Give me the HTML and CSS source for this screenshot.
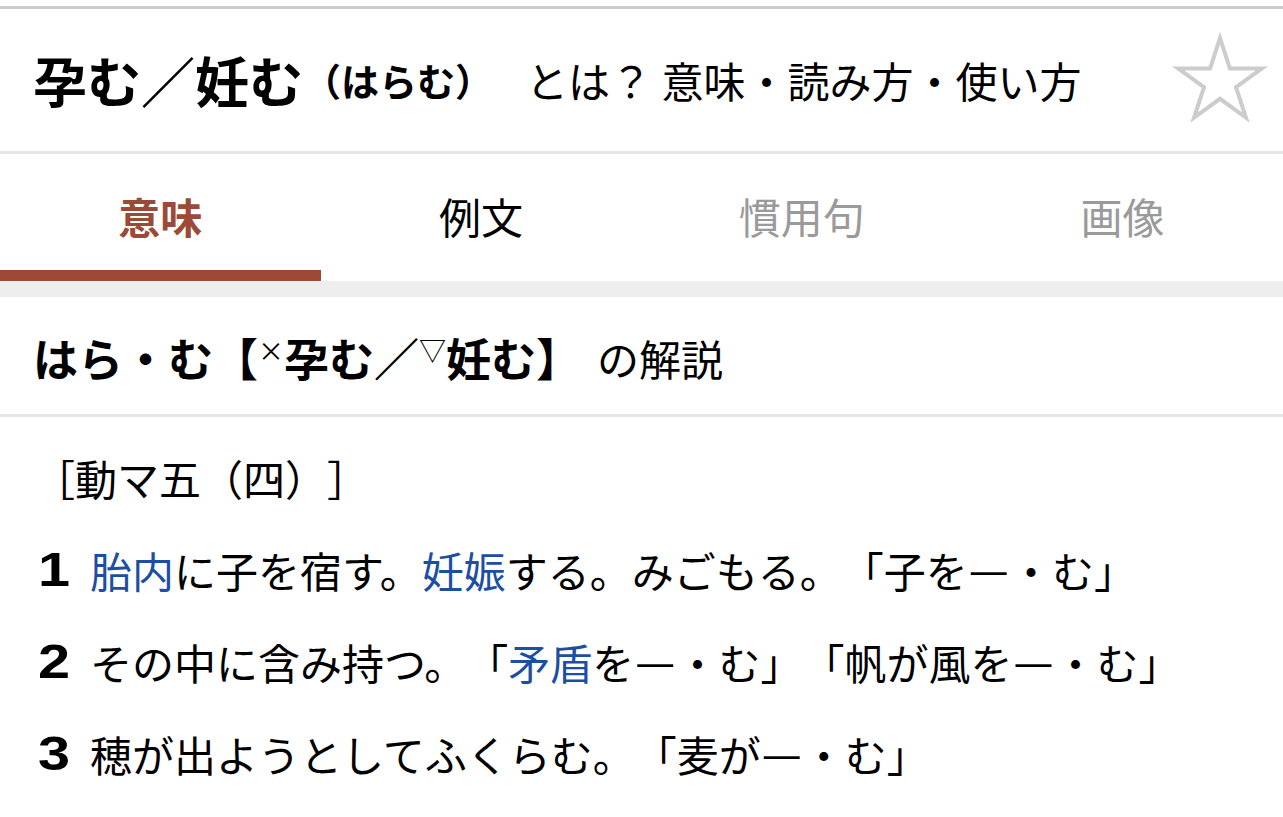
FILE: index.html
```html
<!DOCTYPE html>
<html lang="ja">
<head>
<meta charset="utf-8">
<title>孕む／妊む（はらむ）とは？ 意味・読み方・使い方</title>
<link rel="stylesheet" href="styles.css">
</head>
<body>
<div class="topline"></div>
<header class="head">
  <h1 class="title"><span class="word">孕む／妊む</span><span class="yomi">（はらむ）</span><span class="sub">とは？ 意味・読み方・使い方</span></h1>
  <svg class="star" width="100" height="100" viewBox="0 0 100 100" aria-hidden="true">
    <polygon points="50,8 59.87,38.41 91.85,38.4 65.98,57.19 75.86,87.6 50,68.8 24.14,87.6 34.02,57.19 8.15,38.4 40.13,38.41" fill="none" stroke="#cccccc" stroke-width="4" stroke-linejoin="miter"/>
  </svg>
</header>
<nav class="tabs">
  <div class="tab active">意味</div>
  <div class="tab">例文</div>
  <div class="tab muted">慣用句</div>
  <div class="tab muted">画像</div>
</nav>
<div class="band"></div>
<section class="entry">
  <h2 class="entry-head"><span class="hw">はら・む【<sup class="mark x">×</sup>孕む／<sup class="mark">▽</sup>妊む】</span><span class="kai">の解説</span></h2>
  <div class="body">
    <p class="gram">［動マ五（四）］</p>
    <div class="item"><span class="num"><span class="digit">1</span></span><span class="txt"><span class="link">胎内</span>に子を宿す。<span class="link">妊娠</span>する。みごもる。「子を<span class="dash">―</span>・む」</span></div>
    <div class="item"><span class="num"><span class="digit">2</span></span><span class="txt">その中に含み持つ。「<span class="link">矛盾</span>を<span class="dash">―</span>・む」「帆が風を<span class="dash">―</span>・む」</span></div>
    <div class="item"><span class="num"><span class="digit">3</span></span><span class="txt">穂が出ようとしてふくらむ。「麦が<span class="dash">―</span>・む」</span></div>
  </div>
</section>
</body>
</html>
```
FILE: styles.css
```css
* { box-sizing: border-box; }
html, body { margin: 0; padding: 0; background: #ffffff; }
body {
  font-family: "Noto Sans CJK JP", "Noto Sans", sans-serif;
  color: #000000;
  padding-top: 6px;
  text-spacing-trim: space-all;
}
.topline { height: 3px; background: #cccccc; }
.head {
  height: 145px;
  border-bottom: 3px solid #e6e6e9;
  display: flex;
  align-items: center;
  justify-content: space-between;
  padding: 0 13px 0 33px;
}
.title {
  margin: 0;
  font-weight: normal;
  white-space: nowrap;
  display: flex;
  align-items: center;
  line-height: 1;
}
.word { font-size: 54px; font-weight: bold; }
.yomi { font-size: 38px; font-weight: bold; }
.sub { font-size: 42px; margin-left: 33px; }
.star { display: block; flex: none; }
.tabs {
  display: flex;
  height: 127px;
}
.tab {
  flex: 1 1 0;
  text-align: center;
  font-size: 42px;
  line-height: 42px;
  padding-top: 41px;
  border-bottom: 11px solid transparent;
  color: #000000;
}
.tab.active { color: #9b4a38; font-weight: bold; border-bottom-color: #9b4837; }
.tab.muted { color: #9a9a9a; }
.band { height: 16px; background: #eeeeee; }
.entry-head {
  margin: 0;
  height: 120px;
  border-bottom: 3px solid #e6e6e9;
  display: flex;
  align-items: center;
  padding: 4px 0 0 33px;
  font-weight: normal;
  white-space: nowrap;
}
.hw { font-size: 45px; font-weight: bold; line-height: 1; }
.mark { font-size: 27px; vertical-align: 16px; line-height: 0; font-weight: normal; }
.mark.x { font-size: 26px; }
.kai { font-size: 42px; margin-left: 16px; line-height: 1; }
.body { padding: 15px 0 0 33px; }
.gram { margin: 0; font-size: 42px; line-height: 92px; }
.item { display: flex; font-size: 42px; line-height: 92px; white-space: nowrap; }
.num {
  width: 57px;
  flex: none;
  padding-left: 5px;
  text-align: left;
  font-family: "Liberation Sans", "Noto Sans", sans-serif;
  font-weight: bold;
  font-size: 48px;
}
.digit { display: inline-block; transform: scaleX(1.2); transform-origin: left center; }
.dash { display: inline-block; transform: scaleY(1.6); }
.link { color: #1c4fa1; }
```
